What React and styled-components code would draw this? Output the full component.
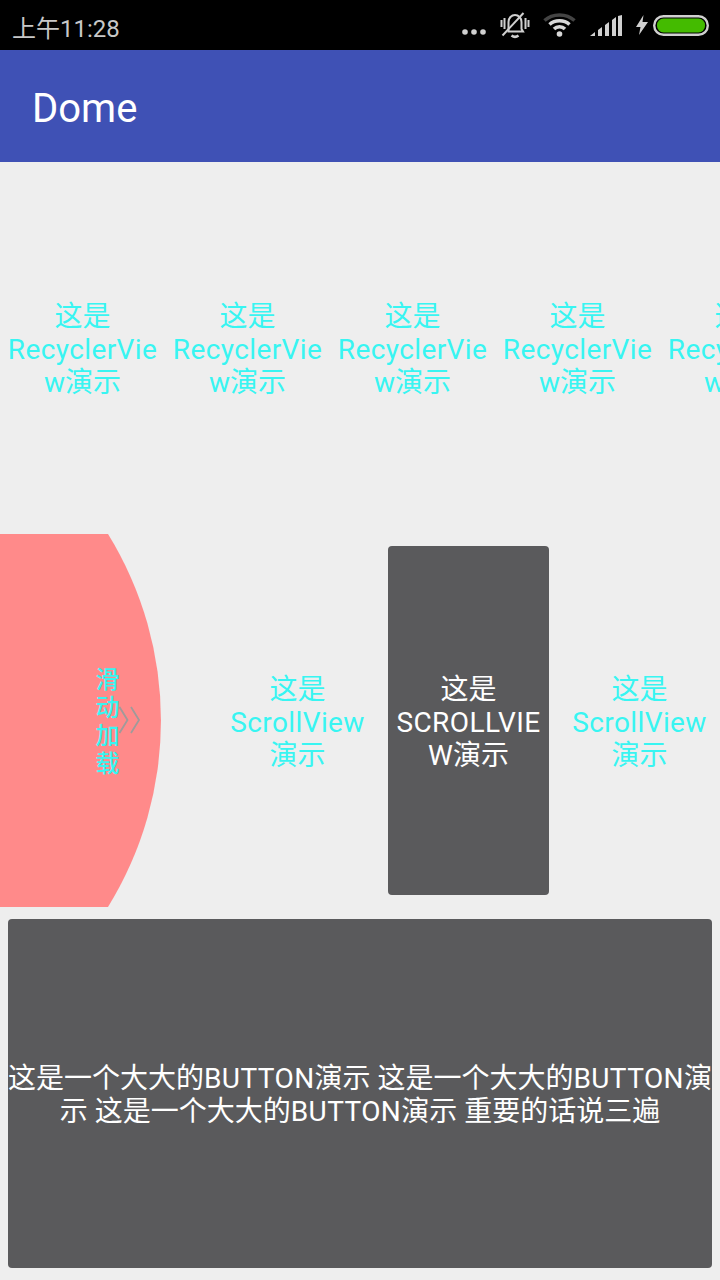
import React from "react";
import styled, { createGlobalStyle } from "styled-components";

const GlobalStyle = createGlobalStyle`
  html, body {
    margin: 0;
    padding: 0;
    background: #eeeeee;
  }
  * {
    box-sizing: border-box;
  }
`;

const FONT = `Roboto, "Noto Sans CJK SC", sans-serif`;
const CYAN = "#38f5f2";

const Page = styled.div`
  width: 720px;
  height: 1280px;
  overflow: hidden;
  display: flex;
  flex-direction: column;
  background: #eeeeee;
  font-family: ${FONT};
`;

const StatusBar = styled.div`
  height: 50px;
  flex-shrink: 0;
  background: #000;
  display: flex;
  align-items: center;
  justify-content: space-between;
  padding: 0 11px 0 12px;
`;

const Clock = styled.span`
  font-size: 24px;
  color: #c8c8c8;
  padding-top: 2px;
`;

const StatusIcons = styled.div`
  display: flex;
  align-items: center;
`;

const StatusIcon = styled.svg`
  display: block;
  margin-left: ${props => props.$gap || 0}px;
`;

const AppBar = styled.header`
  height: 112px;
  flex-shrink: 0;
  background: #3f51b5;
  display: flex;
  align-items: center;
  padding: 4px 0 0 32px;
  color: #fff;
  font-size: 40px;
`;

const RecyclerRow = styled.div`
  height: 372px;
  flex-shrink: 0;
  display: flex;
  overflow: hidden;
`;

const Label = styled.div`
  flex-shrink: 0;
  width: ${props => props.$width}px;
  display: flex;
  align-items: center;
  justify-content: center;
  padding-top: 3px;
  text-align: center;
  white-space: nowrap;
  font-size: 28px;
  line-height: 33px;
  color: ${CYAN};
`;

const Latin = styled.span`
  letter-spacing: 0.4px;
`;

const ScrollRow = styled.div`
  height: 373px;
  flex-shrink: 0;
  display: flex;
  overflow: hidden;
`;

const PullPanel = styled.div`
  position: relative;
  flex-shrink: 0;
  width: 161px;
  margin-right: 51px;
`;

const PullShape = styled.svg`
  display: block;
`;

const PullHint = styled.div`
  position: absolute;
  left: 95px;
  top: 132px;
  display: flex;
  align-items: center;
`;

const PullText = styled.div`
  width: 25px;
  font-size: 24px;
  font-weight: 500;
  line-height: 28px;
  text-align: center;
  color: ${CYAN};
`;

const Chevrons = styled.svg`
  display: block;
  margin: -4px 0 0 -1px;
`;

const CardSlot = styled.div`
  flex-shrink: 0;
  width: 171px;
  padding: 12px 5px;
  display: flex;
`;

const DarkButton = styled.button`
  flex: 1;
  border: none;
  border-radius: 4px;
  background: #5a5a5c;
  color: #fff;
  font-family: ${FONT};
  font-size: 28px;
  line-height: 33px;
  padding: 3px 0 0;
  text-align: center;
  white-space: nowrap;
`;

const ButtonRow = styled.div`
  flex: 1;
  display: flex;
  padding: 12px 8px;
`;

const texts = [0, 1, 2, 3, 4];

export default function App() {
  return (
    <Page>
      <GlobalStyle />
      <StatusBar>
        <Clock>上午11:28</Clock>
        <StatusIcons>
          <StatusIcon width="38" height="30" viewBox="0 0 38 30" fill="#d0d0d0">
            <circle cx="3" cy="22" r="2.800" />
            <circle cx="12" cy="22" r="2.800" />
            <circle cx="21" cy="22" r="2.800" />
          </StatusIcon>
          <StatusIcon width="30" height="30" viewBox="0 0 30 30" fill="none" stroke="#d0d0d0">
            <path d="M1.500 10v7M4.500 8v11M25.500 8v11M28.500 10v7" strokeWidth="2" />
            <path d="M8.500 21V12c0-4 3-7 6.500-7s6.500 3 6.500 7v7l1.500 2.500H7.500" strokeWidth="2" />
            <path d="M11.500 25.500c2 1.600 5 1.600 7 0" strokeWidth="2.500" />
            <path d="M23.500 3 2.500 25.500" strokeWidth="2" />
          </StatusIcon>
          <StatusIcon $gap={13} width="33" height="30" viewBox="0 0 33 30" fill="none">
            <path d="M1.500 10.500C9.500 3 23.500 3 31.500 10.500" stroke="#444" strokeWidth="3.500" />
            <path d="M6.500 14.500C12 9.500 21 9.500 26.500 14.500" stroke="#d8d8d8" strokeWidth="3.500" />
            <path d="M11 19c3-3 8-3 11 0" stroke="#d8d8d8" strokeWidth="3.500" />
            <circle cx="16.500" cy="24" r="2.800" fill="#d8d8d8" />
          </StatusIcon>
          <StatusIcon $gap={14} width="32" height="30" viewBox="0 0 32 30" fill="#d0d0d0">
            <path d="M0 26 5 22v4zM8 20l4-3v9H8zM15 15l4-3v14h-4zM22 10l4-3v19h-4zM28 6l4-1v21h-4z" />
          </StatusIcon>
          <StatusIcon $gap={14} width="12" height="30" viewBox="0 0 12 30" fill="#d0d0d0">
            <path d="M7.500 5 0 17h4.500L3 25 12 12H6.500z" />
          </StatusIcon>
          <StatusIcon $gap={5} width="56" height="30" viewBox="0 0 56 30">
            <rect x="1.200" y="6.200" width="53.600" height="18.600" rx="9.300" fill="#000" stroke="#d0d0d0" strokeWidth="2.400" />
            <rect x="4" y="8.500" width="48" height="14" rx="6.500" fill="#44bb00" />
          </StatusIcon>
        </StatusIcons>
      </StatusBar>
      <AppBar>Dome</AppBar>
      <RecyclerRow>
        {texts.map(i => (
          <Label key={i} $width={165}>
            <span>
              这是
              <br />
              <Latin>RecyclerVie</Latin>
              <br />
              w演示
            </span>
          </Label>
        ))}
      </RecyclerRow>
      <ScrollRow>
        <PullPanel>
          <PullShape width="161" height="373" viewBox="0 0 161 373">
            <path d="M0 0H108A355 355 0 0 1 108 373H0Z" fill="#ff8a8a" />
          </PullShape>
          <PullHint>
            <PullText>
              滑<br />动<br />加<br />载
            </PullText>
            <Chevrons width="22" height="30" viewBox="0 0 22 30" fill="none" stroke="#a09a9a" strokeWidth="1.800">
              <path d="M.5 2 8.500 15 .5 28M12 2l8 13-8 13" />
            </Chevrons>
          </PullHint>
        </PullPanel>
        <Label $width={171}>
          <span>
            这是
            <br />
            <Latin>ScrollView</Latin>
            <br />
            演示
          </span>
        </Label>
        <CardSlot>
          <DarkButton>
            这是
            <br />
            <Latin>SCROLLVIE</Latin>
            <br />
            W演示
          </DarkButton>
        </CardSlot>
        <Label $width={171}>
          <span>
            这是
            <br />
            <Latin>ScrollView</Latin>
            <br />
            演示
          </span>
        </Label>
      </ScrollRow>
      <ButtonRow>
        <DarkButton>
          这是一个大大的<Latin>BUTTON</Latin>演示 这是一个大大的<Latin>BUTTON</Latin>演
          <br />
          示 这是一个大大的<Latin>BUTTON</Latin>演示 重要的话说三遍
        </DarkButton>
      </ButtonRow>
    </Page>
  );
}
